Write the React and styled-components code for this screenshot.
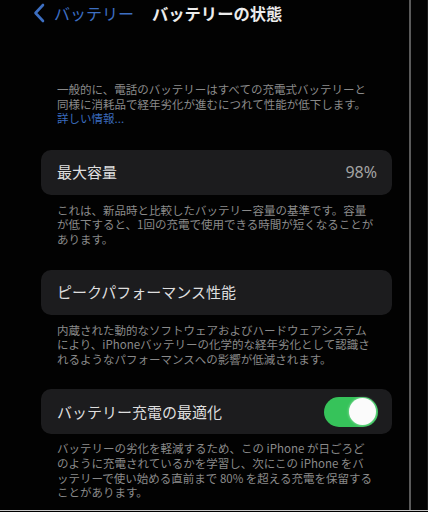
import React from 'react'
import styled, { createGlobalStyle } from 'styled-components'

const Global = createGlobalStyle`
  html, body {
    margin: 0;
    padding: 0;
    background: #000;
  }
  body {
    font-family: "Noto Sans CJK JP", "Noto Sans", sans-serif;
    -webkit-font-smoothing: antialiased;
  }
`

const Page = styled.div`
  width: 428px;
  height: 512px;
  display: flex;
  flex-direction: column;
  background: #000;
  overflow: hidden;
`

const Body = styled.div`
  flex: 1;
  display: flex;
  min-height: 0;
`

const Screen = styled.div`
  width: 409px;
  display: flex;
  flex-direction: column;
  background: #020202;
`

const Divider = styled.div`
  width: 2px;
  background: #5a5a5a;
`

const Edge = styled.div`
  flex: 1;
  background: #030303;
  border-right: 1px solid #1a1a1a;
`

const BottomLine = styled.div`
  height: 1px;
  margin-bottom: 1px;
  background: #c8c8c8;
`

const NavBar = styled.div`
  height: 26px;
  display: flex;
  align-items: center;
  padding-left: 33px;
`

const Back = styled.div`
  display: flex;
  align-items: center;
  gap: 9px;
  color: #3d6fc2;
  font-size: 16px;
  line-height: 20px;
`

const Title = styled.div`
  margin-left: 18px;
  color: #ececec;
  font-size: 16.3px;
  font-weight: 700;
  line-height: 20px;
`

const Content = styled.div`
  padding: 56px 17px 0 41px;
  display: flex;
  flex-direction: column;
`

const Note = styled.p`
  margin: 0;
  padding: 0 16px;
  color: #8a8a8a;
  font-size: 11.5px;
  line-height: 14.6px;
  white-space: nowrap;
  margin-top: ${p => p.$top || 0}px;
  margin-bottom: ${p => p.$bottom || 0}px;
`

const Link = styled.span`
  color: #3a6bbd;
`

const Card = styled.div`
  height: 45px;
  display: flex;
  align-items: center;
  justify-content: space-between;
  padding: 0 15px 0 16px;
  background: #1c1c1e;
  border-radius: 10px;
`

const Label = styled.span`
  color: #dedede;
  font-size: 15px;
  line-height: 20px;
`

const Value = styled.span`
  color: #a4a4a4;
  font-size: 16px;
  font-family: "Noto Sans", sans-serif;
  line-height: 20px;
`

const Toggle = styled.div`
  width: 54px;
  height: 30px;
  margin-right: -1px;
  border-radius: 15px;
  background: #36c35a;
  display: flex;
  align-items: center;
  justify-content: flex-end;
  padding: 0 2px;
  box-sizing: border-box;
`

const Knob = styled.div`
  width: 27px;
  height: 27px;
  border-radius: 50%;
  background: #fbfbfb;
  box-shadow: 0 0 3px rgba(255, 255, 255, 0.6);
`

const Chevron = () => (
  <svg width="12" height="20" viewBox="0 0 12 20">
    <path d="M10 2 L2.5 10 L10 18" fill="none" stroke="#3d6fc2" strokeWidth="2.6" strokeLinecap="round" strokeLinejoin="round" />
  </svg>
)

const Lines = ({ lines }) =>
  lines.map((l, i) => (
    <React.Fragment key={i}>
      {i > 0 && <br />}
      {l}
    </React.Fragment>
  ))

export default function App() {
  return (
    <Page>
      <Global />
      <Body>
        <Screen>
          <NavBar>
            <Back>
              <Chevron />
              バッテリー
            </Back>
            <Title>バッテリーの状態</Title>
          </NavBar>
          <Content>
            <Note $bottom={24}>
              <Lines lines={[
                '一般的に、電話のバッテリーはすべての充電式バッテリーと',
                '同様に消耗品で経年劣化が進むにつれて性能が低下します。',
                <Link key="l">詳しい情報...</Link>,
              ]} />
            </Note>

            <Card>
              <Label>最大容量</Label>
              <Value>98%</Value>
            </Card>
            <Note $top={8} $bottom={23}>
              <Lines lines={[
                'これは、新品時と比較したバッテリー容量の基準です。容量',
                'が低下すると、1回の充電で使用できる時間が短くなることが',
                'あります。',
              ]} />
            </Note>

            <Card>
              <Label>ピークパフォーマンス性能</Label>
            </Card>
            <Note $top={8} $bottom={23}>
              <Lines lines={[
                '内蔵された動的なソフトウェアおよびハードウェアシステム',
                'により、iPhoneバッテリーの化学的な経年劣化として認識さ',
                'れるようなパフォーマンスへの影響が低減されます。',
              ]} />
            </Note>

            <Card>
              <Label>バッテリー充電の最適化</Label>
              <Toggle>
                <Knob />
              </Toggle>
            </Card>
            <Note $top={7}>
              <Lines lines={[
                'バッテリーの劣化を軽減するため、この iPhone が日ごろど',
                'のように充電されているかを学習し、次にこの iPhone をバ',
                'ッテリーで使い始める直前まで 80% を超える充電を保留する',
                'ことがあります。',
              ]} />
            </Note>
          </Content>
        </Screen>
        <Divider />
        <Edge />
      </Body>
      <BottomLine />
    </Page>
  )
}
